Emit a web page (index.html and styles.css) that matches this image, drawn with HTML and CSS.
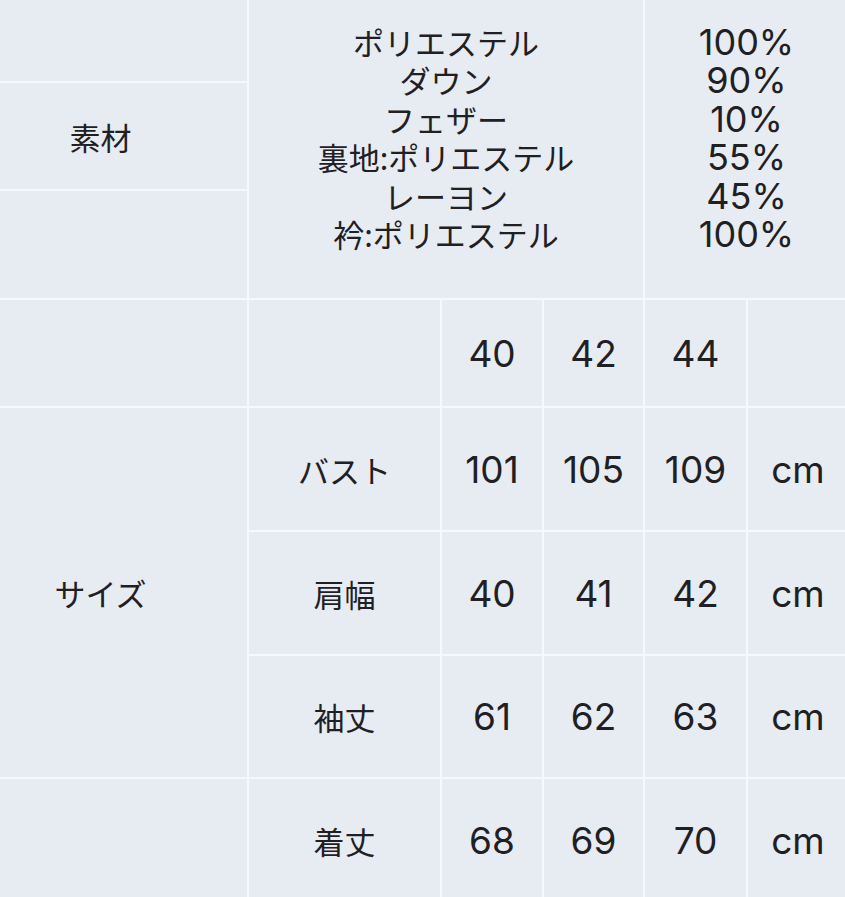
FILE: index.html
```html
<!DOCTYPE html>
<html lang="ja">
<head>
<meta charset="utf-8">
<title>素材・サイズ</title>
<link rel="stylesheet" href="styles.css">
</head>
<body>
<div class="sheet">
  <div class="cell"></div>
  <div class="cell materials">
    <span class="line">ポリエステル</span>
    <span class="line">ダウン</span>
    <span class="line">フェザー</span>
    <span class="line">裏地:ポリエステル</span>
    <span class="line">レーヨン</span>
    <span class="line">衿:ポリエステル</span>
  </div>
  <div class="cell percents">
    <span class="line">100%</span>
    <span class="line">90%</span>
    <span class="line">10%</span>
    <span class="line">55%</span>
    <span class="line">45%</span>
    <span class="line">100%</span>
  </div>
  <div class="cell jp">素材</div>
  <div class="cell"></div>

  <div class="cell"></div>
  <div class="cell"></div>
  <div class="cell num">40</div>
  <div class="cell num">42</div>
  <div class="cell num">44</div>
  <div class="cell"></div>

  <div class="cell jp size-label">サイズ</div>
  <div class="cell jp">バスト</div>
  <div class="cell num">101</div>
  <div class="cell num">105</div>
  <div class="cell num">109</div>
  <div class="cell num">cm</div>

  <div class="cell jp">肩幅</div>
  <div class="cell num">40</div>
  <div class="cell num">41</div>
  <div class="cell num">42</div>
  <div class="cell num">cm</div>

  <div class="cell jp">袖丈</div>
  <div class="cell num">61</div>
  <div class="cell num">62</div>
  <div class="cell num">63</div>
  <div class="cell num">cm</div>

  <div class="cell"></div>
  <div class="cell jp">着丈</div>
  <div class="cell num">68</div>
  <div class="cell num">69</div>
  <div class="cell num">70</div>
  <div class="cell num">cm</div>
</div>
</body>
</html>
```
FILE: styles.css
```css
html, body {
  margin: 0;
  padding: 0;
  background: #e7ebf2;
  overflow: hidden;
}

body {
  width: 845px;
  height: 897px;
  font-family: "Noto Sans CJK JP", sans-serif;
  color: #1f2023;
}

.sheet {
  margin-top: -22px;
  margin-left: -46px;
  width: 894px;
  display: grid;
  grid-template-columns: 293px 191px 100px 99px 101px 1fr;
  grid-template-rows: 103px 106px 107px 106px 122px 122px 121px 122px;
  gap: 2px;
  background: #f6f8fb;
}

.cell {
  background: #e7ebf2;
  display: flex;
  align-items: center;
  justify-content: center;
}

.jp {
  font-size: 31px;
  line-height: 1;
}

.num {
  font-family: "Inter", "Noto Sans", sans-serif;
  font-size: 37px;
  line-height: 1;
}

.materials {
  grid-column: span 3;
  grid-row: span 3;
  flex-direction: column;
  font-size: 31px;
}

.percents {
  grid-column: span 2;
  grid-row: span 3;
  flex-direction: column;
  font-family: "Inter", "Noto Sans", sans-serif;
  font-size: 36px;
}

.line {
  display: block;
  height: 38.5px;
  line-height: 38.5px;
  white-space: nowrap;
}

.size-label {
  grid-row: span 3;
}
```
